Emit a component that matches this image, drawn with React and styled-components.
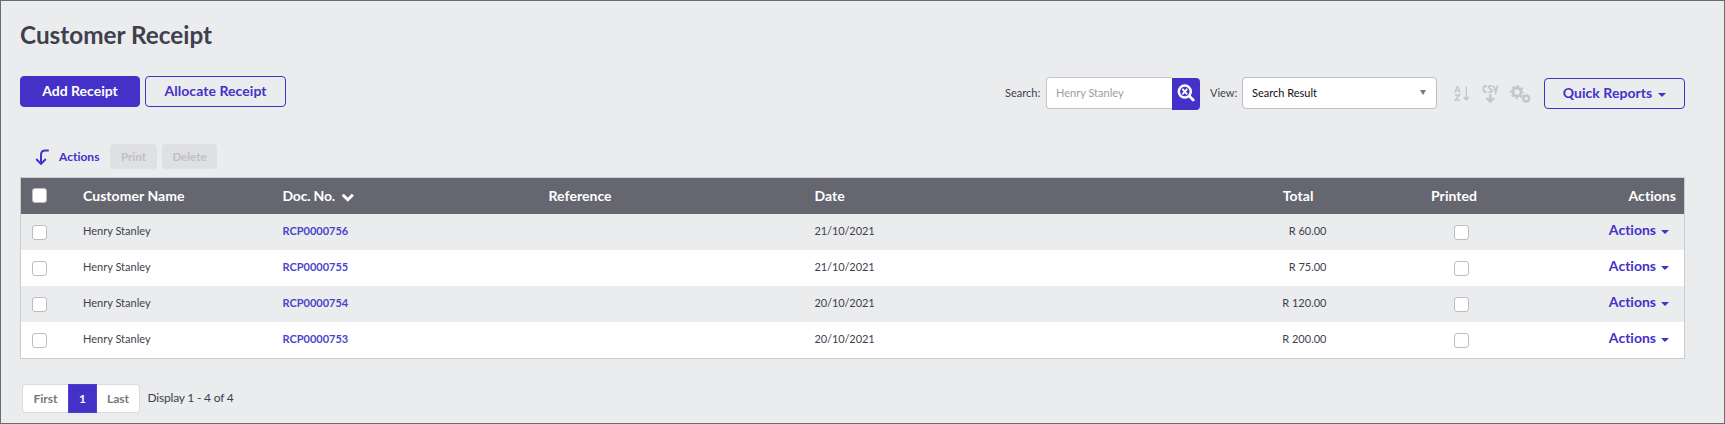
import React from "react";
import styled, { createGlobalStyle } from "styled-components";

const indigo = "#4431c8";

const GlobalStyle = createGlobalStyle`
  *, *::before, *::after { box-sizing: border-box; }
  body { margin: 0; background: #ebeced; }
  body, button, input {
    font-family: Lato, "Liberation Sans", sans-serif;
    font-variant-ligatures: none;
  }
`;

const Page = styled.main`
  height: 424px;
  padding: 19px 39px 0 19px;
  border: 1px solid #6b6b6d;
  background: #ebeced;
  color: #403f4e;
  font-size: 11px;
  line-height: 16px;
  overflow: hidden;
`;

const Title = styled.h1`
  margin: 0;
  font-size: 24.3px;
  font-weight: 700;
  line-height: 30px;
`;

const Toolbar = styled.div`
  display: flex;
  justify-content: space-between;
  align-items: flex-start;
  height: 34px;
  margin-top: 26px;
`;

const ButtonGroup = styled.div`
  display: flex;
  gap: 5px;
`;

const Button = styled.button`
  display: flex;
  align-items: center;
  justify-content: center;
  gap: 6px;
  width: ${(p) => p.$width}px;
  height: 31px;
  padding: 0 0 1px;
  border: 1px solid ${indigo};
  border-radius: 4px;
  background: ${(p) => (p.$primary ? indigo : "transparent")};
  color: ${(p) => (p.$primary ? "#fff" : indigo)};
  font-size: 14px;
  font-weight: 700;
  letter-spacing: ${(p) => (p.$primary ? 0 : 0.06)}px;
  line-height: 18px;
`;

const Filters = styled.div`
  display: flex;
  align-items: flex-start;
  padding-top: 1px;
`;

const FieldLabel = styled.label`
  width: ${(p) => p.$width}px;
  line-height: 32px;
`;

const SearchInput = styled.input`
  width: 126px;
  height: 32px;
  padding: 0 9px 1px;
  border: 1px solid #c5c5ca;
  border-right: 0;
  border-radius: 4px 0 0 4px;
  outline: 0;
  background: #fff;
  color: #9d9da1;
  font-size: 11px;
`;

const SearchButton = styled.button`
  display: flex;
  align-items: center;
  justify-content: center;
  width: 28px;
  height: 32px;
  margin: 1px 10px 0 0;
  padding: 0 0 2px;
  border: 0;
  border-radius: 0 4px 4px 0;
  background: ${indigo};
`;

const Select = styled.div`
  display: flex;
  align-items: center;
  justify-content: space-between;
  width: 195px;
  height: 32px;
  padding: 0 10px 0 9px;
  border: 1px solid #bdbdc5;
  border-radius: 4px;
  background: #fff;
  color: #111;
`;

const ToolIcons = styled.div`
  display: flex;
  align-items: flex-start;
  gap: 11px;
  width: 107px;
  padding: 8px 0 0 17px;
  color: #c3c5ca;
`;

const ReportsSlot = styled.div`
  padding-top: 1px;
`;

const Caret = styled.span`
  width: 0;
  height: 0;
  margin-top: 3px;
  border: 4px solid transparent;
  border-top-color: currentColor;
  border-bottom: 0;
`;

const BulkActions = styled.div`
  display: flex;
  align-items: center;
  height: 25px;
  margin-top: 34px;
  padding-left: 15px;
`;

const BulkLabel = styled.span`
  width: 51px;
  margin-left: 9px;
  color: ${indigo};
  font-size: 12px;
  font-weight: 700;
`;

const DisabledButton = styled.button`
  width: ${(p) => p.$width}px;
  height: 25px;
  margin-right: 5px;
  padding: 0 0 1px;
  border: 0;
  border-radius: 4px;
  background: #dfe0e1;
  color: #bfc0c4;
  font-size: 11.5px;
  font-weight: 700;
`;

const Table = styled.div`
  width: 1665px;
  margin-top: 8px;
  border: 1px solid #cacbcf;
`;

const Row = styled.div`
  display: grid;
  grid-template-columns: 62px 199.5px 266px 266px 150px 362px 256px 1fr;
  height: 36px;
  background: ${(p) => (p.$odd ? "#ebeced" : "#fff")};
`;

const HeaderRow = styled(Row)`
  background: #656670;
  color: #fff;
  font-size: 14px;
  font-weight: 700;
  letter-spacing: 0.05px;
`;

const Cell = styled.div`
  display: flex;
  align-items: flex-start;
  justify-content: ${(p) => (p.$end ? "flex-end" : "flex-start")};
  padding: ${(p) => p.$top ?? 9}px ${(p) => p.$right ?? 0}px 0 ${(p) => p.$left ?? 0}px;
  white-space: nowrap;
`;

const Checkbox = styled.span`
  width: 15px;
  height: 15px;
  border: 1px solid #bdbec4;
  border-radius: 3px;
  background: #fff;
`;

const DateText = styled.span`
  letter-spacing: -0.1px;
`;

const DocLink = styled.a`
  color: #4a45cb;
  font-weight: 700;
`;

const RowMenu = styled.span`
  display: flex;
  align-items: center;
  gap: 5px;
  color: ${indigo};
  font-size: 14px;
  font-weight: 700;
  line-height: 18px;
`;

const Footer = styled.div`
  display: flex;
  margin: 25px 0 0 2px;
  font-size: 12px;
`;

const PageItem = styled.span`
  width: ${(p) => p.$width}px;
  height: 29px;
  border: 1px solid ${(p) => (p.$active ? "#4e3fd0" : "#dcdcde")};
  border-left-width: ${(p) => (p.$last ? 0 : 1)}px;
  border-right-width: ${(p) => (p.$first ? 0 : 1)}px;
  border-radius: ${(p) => (p.$first ? "4px 0 0 4px" : p.$last ? "0 4px 4px 0" : "0")};
  background: ${(p) => (p.$active ? indigo : "#fff")};
  color: ${(p) => (p.$active ? "#fff" : "#77777b")};
  font-weight: 700;
  line-height: 28px;
  text-align: center;
`;

const PageInfo = styled.span`
  margin-left: 7.5px;
  letter-spacing: -0.2px;
  line-height: 27px;
`;

const SearchClearIcon = () => (
  <svg width="18" height="18" viewBox="0 0 18 18" fill="none" stroke="#fff">
    <circle cx="7.8" cy="7.6" r="6" strokeWidth="2.5" />
    <path d="M12.5 12.3 16.2 16" strokeWidth="2.8" strokeLinecap="round" />
    <path d="M5.4 4.8 10.2 10.4M10.2 4.8 5.4 10.4" strokeWidth="1.8" />
  </svg>
);

const SortIcon = () => (
  <svg width="17" height="18" viewBox="0 0 17 18" fill="none" stroke="currentColor">
    <path d="M1 7.6 3.2 1.6h.5L6 7.6M2 5.6h3M1 10h4.5L1.2 15H6" strokeWidth="1.4" />
    <path d="M12.3 1.6v13" strokeWidth="1.3" />
    <path d="m9.6 11.9 2.7 2.8 2.7-2.8" strokeWidth="1.5" />
  </svg>
);

const CsvIcon = () => (
  <svg width="17" height="19" viewBox="0 0 17 19" fill="none" stroke="currentColor">
    <path d="M5 1.5C2.6.2 1.3 1.8 1.3 4.1S2.8 7.8 5 6.8M10 1.3C8.2.4 6.9 1.1 6.9 2.4c0 1.8 3 1.4 3 3.3 0 1.5-1.8 1.8-3.4 1.1M11.5.4l2.1 6.8 2.1-6.8" strokeWidth="1.8" />
    <path d="M8.3 8.9v7.2M4.5 13l3.8 3.8 3.8-3.8" strokeWidth="2.2" />
  </svg>
);

const CogsIcon = () => (
  <svg width="21" height="19" viewBox="0 0 21 19" fill="none" stroke="currentColor">
    <circle cx="7" cy="7" r="4.1" strokeWidth="2.7" />
    <circle cx="7" cy="7" r="6" strokeWidth="1.8" strokeDasharray="2.5 2.212" strokeDashoffset="1.25" />
    <circle cx="16.2" cy="13.5" r="2.7" strokeWidth="1.9" />
    <circle cx="16.2" cy="13.5" r="4" strokeWidth="1.3" strokeDasharray="1.7 1.442" strokeDashoffset="0.85" />
  </svg>
);

const DownTurnIcon = () => (
  <svg width="15" height="16" viewBox="0 0 15 16" fill="none" stroke={indigo} strokeWidth="2">
    <path d="M13.8 1.5H10.5Q6 1.5 6 5.8V14.5" />
    <path d="m1.2 10 4.8 4.9 4.8-4.9" />
  </svg>
);

const ChevronIcon = () => (
  <svg width="14" height="10" viewBox="0 0 14 10" fill="none" stroke="#fff" strokeWidth="3">
    <path d="m1.7 1.7 5.1 5 5.1-5" />
  </svg>
);

const DocHeader = styled.span`
  display: flex;
  align-items: center;
  gap: 6px;
  letter-spacing: -0.2px;

  svg { margin-top: 3px; }
`;

const SelectArrow = styled.span`
  border: 3.5px solid transparent;
  border-top: 5px solid #77777b;
  border-bottom: 0;
  margin-bottom: 1px;
`;

const receipts = [
  { doc: "RCP0000756", date: "21/10/2021", total: "R 60.00" },
  { doc: "RCP0000755", date: "21/10/2021", total: "R 75.00" },
  { doc: "RCP0000754", date: "20/10/2021", total: "R 120.00" },
  { doc: "RCP0000753", date: "20/10/2021", total: "R 200.00" },
];

export default function App() {
  return (
    <Page>
      <GlobalStyle />
      <Title>Customer Receipt</Title>
      <Toolbar>
        <ButtonGroup>
          <Button $primary $width={120}>Add Receipt</Button>
          <Button $width={141}>Allocate Receipt</Button>
        </ButtonGroup>
        <Filters>
          <FieldLabel $width={41}>Search:</FieldLabel>
          <SearchInput defaultValue="Henry Stanley" />
          <SearchButton aria-label="Clear search"><SearchClearIcon /></SearchButton>
          <FieldLabel $width={32}>View:</FieldLabel>
          <Select>Search Result<SelectArrow /></Select>
          <ToolIcons>
            <SortIcon />
            <CsvIcon />
            <CogsIcon />
          </ToolIcons>
          <ReportsSlot>
            <Button $width={141}>Quick Reports<Caret /></Button>
          </ReportsSlot>
        </Filters>
      </Toolbar>
      <BulkActions>
        <DownTurnIcon />
        <BulkLabel>Actions</BulkLabel>
        <DisabledButton disabled $width={47}>Print</DisabledButton>
        <DisabledButton disabled $width={55}>Delete</DisabledButton>
      </BulkActions>
      <Table>
        <HeaderRow>
          <Cell $top={10} $left={11}><Checkbox /></Cell>
          <Cell $top={10}>Customer Name</Cell>
          <Cell $top={10}><DocHeader>Doc. No.<ChevronIcon /></DocHeader></Cell>
          <Cell $top={10}>Reference</Cell>
          <Cell $top={10}>Date</Cell>
          <Cell $top={10} $end $right={13}>Total</Cell>
          <Cell $top={10} $left={104.5}>Printed</Cell>
          <Cell $top={10} $end $right={8}>Actions</Cell>
        </HeaderRow>
        {receipts.map((r, i) => (
          <Row key={r.doc} $odd={i % 2 === 0}>
            <Cell $top={11} $left={11}><Checkbox /></Cell>
            <Cell>Henry Stanley</Cell>
            <Cell><DocLink>{r.doc}</DocLink></Cell>
            <Cell />
            <Cell><DateText>{r.date}</DateText></Cell>
            <Cell $end>{r.total}</Cell>
            <Cell $top={11} $left={127.5}><Checkbox /></Cell>
            <Cell $top={7} $end $right={15}><RowMenu>Actions<Caret /></RowMenu></Cell>
          </Row>
        ))}
      </Table>
      <Footer>
        <PageItem $first $width={46}>First</PageItem>
        <PageItem $active $width={29}>1</PageItem>
        <PageItem $last $width={43}>Last</PageItem>
        <PageInfo>Display 1 - 4 of 4</PageInfo>
      </Footer>
    </Page>
  );
}
